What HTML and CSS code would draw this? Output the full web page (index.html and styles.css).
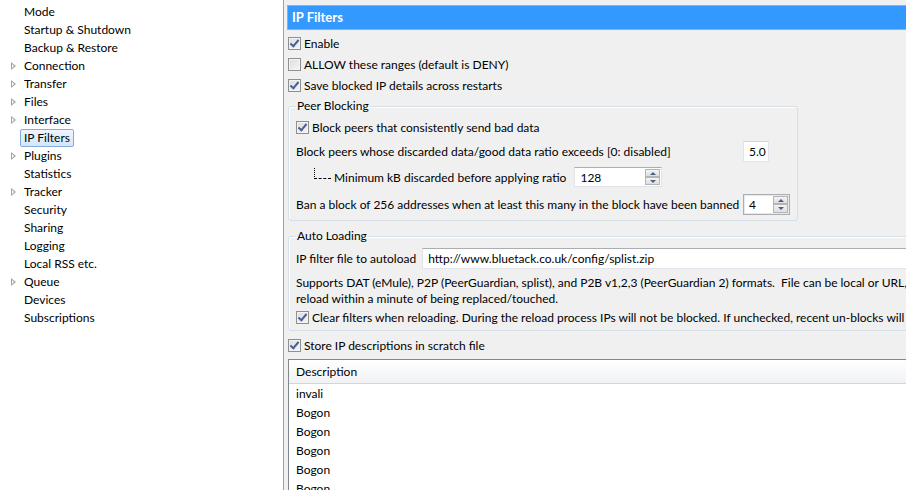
FILE: index.html
```html
<!DOCTYPE html>
<html lang="en">
<head>
    <meta charset="UTF-8">
    <title>Options - IP Filters</title>
    <link rel="stylesheet" href="styles.css">
</head>
<body>
<div class="window">

    <!-- left side: options tree -->
    <div class="tree">
        <ul>
            <li><span class="leaf">Mode</span></li>
            <li><span class="leaf">Startup &amp; Shutdown</span></li>
            <li><span class="leaf">Backup &amp; Restore</span></li>
            <li class="has-kids"><span class="leaf">Connection</span></li>
            <li class="has-kids"><span class="leaf">Transfer</span></li>
            <li class="has-kids"><span class="leaf">Files</span></li>
            <li class="has-kids"><span class="leaf">Interface</span></li>
            <li class="selected"><span class="leaf">IP Filters</span></li>
            <li class="has-kids"><span class="leaf">Plugins</span></li>
            <li><span class="leaf">Statistics</span></li>
            <li class="has-kids"><span class="leaf">Tracker</span></li>
            <li><span class="leaf">Security</span></li>
            <li><span class="leaf">Sharing</span></li>
            <li><span class="leaf">Logging</span></li>
            <li><span class="leaf">Local RSS etc.</span></li>
            <li class="has-kids"><span class="leaf">Queue</span></li>
            <li><span class="leaf">Devices</span></li>
            <li><span class="leaf">Subscriptions</span></li>
        </ul>
    </div>

    <!-- right side: the page itself -->
    <div class="page">
        <div class="page-inner">
            <div class="title">IP Filters</div>

            <label class="check"><span class="box on"></span>Enable</label>
            <label class="check"><span class="box"></span>ALLOW these ranges (default is DENY)</label>
            <label class="check"><span class="box on"></span>Save blocked IP details across restarts</label>

            <fieldset class="group peer">
                <legend>Peer Blocking</legend>
                <label class="check first"><span class="box on"></span>Block peers that consistently send bad data</label>
                <div class="row ratio">
                    <span class="lbl">Block peers whose discarded data/good data ratio exceeds [0: disabled]</span>
                    <span class="field small">5.0</span>
                </div>
                <div class="row minkb">
                    <span class="connector"></span>
                    <span>Minimum kB discarded before applying ratio</span>
                    <span class="field spin wide">128<span class="arrows"><i class="up"></i><i class="down"></i></span></span>
                </div>
                <div class="row ban">
                    <span class="lbl">Ban a block of 256 addresses when at least this many in the block have been banned</span>
                    <span class="field spin">4<span class="arrows"><i class="up"></i><i class="down"></i></span></span>
                </div>
            </fieldset>

            <fieldset class="group auto">
                <legend>Auto Loading</legend>
                <div class="row url">
                    <span>IP filter file to autoload</span>
                    <span class="field text">http://www.bluetack.co.uk/config/splist.zip</span>
                </div>
                <p class="note">Supports DAT (eMule), P2P (PeerGuardian, splist), and P2B v1,2,3 (PeerGuardian 2) formats.&nbsp; File can be local or URL, and will automatically<br>reload within a minute of being replaced/touched.</p>
                <label class="check"><span class="box on"></span>Clear filters when reloading. During the reload process IPs will not be blocked. If unchecked, recent un-blocks will be lost</label>
            </fieldset>

            <label class="check store"><span class="box on"></span>Store IP descriptions in scratch file</label>

            <div class="table">
                <div class="thead">Description</div>
                <div class="trow">invali</div>
                <div class="trow">Bogon</div>
                <div class="trow">Bogon</div>
                <div class="trow">Bogon</div>
                <div class="trow">Bogon</div>
                <div class="trow">Bogon</div>
                <div class="trow">Bogon</div>
            </div>
        </div>
    </div>
</div>
</body>
</html>
```
FILE: styles.css
```css
body{
    margin: 0;
    background-color: #f0f0f0;
    font-family: Lato, "Noto Sans", sans-serif;
    font-size: 12px;
    color: #000;
}
.window{
    display: flex;
    width: 906px;
    height: 490px;
    overflow: hidden;
}

/* tree */
.tree{
    width: 283px;
    flex: none;
    background-color: #fff;
    border-right: 1px solid #a0a0a0;
}
.tree ul{
    list-style: none;
    margin: 3px 0 0 0;
    padding: 0;
}
.tree li{
    position: relative;
    height: 18px;
    line-height: 18px;
    padding-left: 20px;
}
.tree .leaf{
    display: inline-block;
    padding: 0 3px;
    border: 1px solid transparent;
    line-height: 16px;
    border-radius: 2px;
}
.tree li.has-kids::before{
    content: "";
    position: absolute;
    left: 11px;
    top: 5px;
    width: 0;
    height: 0;
    border-top: 4px solid transparent;
    border-bottom: 4px solid transparent;
    border-left: 5px solid #a6a6a6;
}
.tree li.has-kids::after{
    content: "";
    position: absolute;
    left: 12px;
    top: 7px;
    width: 0;
    height: 0;
    border-top: 2px solid transparent;
    border-bottom: 2px solid transparent;
    border-left: 2px solid #fff;
}
.tree li.selected .leaf{
    border-color: #84acdd;
    background: linear-gradient(#eef5fd, #d3e6fc);
}

/* page */
.page{
    flex: 1;
    min-width: 0;
    overflow: hidden;
}
.page-inner{
    width: 900px;
    padding-left: 4px;
}
.title{
    margin: 5px 0 3px -1px;
    height: 25px;
    box-sizing: border-box;
    border: 1px solid #8cb0d8;
    background-color: #3399ff;
    color: #fff;
    font-weight: bold;
    font-size: 13px;
    line-height: 23px;
    padding-left: 4px;
}

.check{
    display: flex;
    align-items: center;
    height: 21px;
    white-space: nowrap;
}
.box{
    width: 13px;
    height: 13px;
    box-sizing: border-box;
    border: 1px solid #8e8f8f;
    background: linear-gradient(135deg, #dcdcdc, #f6f6f6);
    box-shadow: inset 0 0 0 1px #f4f4f4;
    margin-right: 3px;
    flex: none;
    position: relative;
}
.box.on::after{
    content: "";
    position: absolute;
    left: 3px;
    top: 0px;
    width: 3px;
    height: 7px;
    border-right: 2px solid #4a5f97;
    border-bottom: 2px solid #4a5f97;
    transform: rotate(40deg);
}

/* group boxes */
.group{
    margin: 2px 0 0 0;
    padding: 0 6px 2px 7px;
    border: 1px solid #d5dfe5;
    border-radius: 3px;
    box-shadow: inset 1px 1px 0 #fff;
}
.group legend{
    padding: 0 1px;
    line-height: 16px;
}
.peer{
    width: 510px;
    box-sizing: border-box;
}
.peer .first{
    margin-top: 3px;
}
.row{
    display: flex;
    align-items: center;
    white-space: nowrap;
}
.ratio{ height: 26px; }
.minkb{ height: 26px; }
.ban{ height: 28px; }
.row .lbl{
    width: 447px;
    flex: none;
}
.connector{
    width: 16px;
    height: 10px;
    margin: -8px 3px 0 18px;
    border-left: 1px dotted #000;
    border-bottom: 1px dashed #000;
}
.field{
    display: inline-flex;
    align-items: center;
    box-sizing: border-box;
    height: 21px;
    background: #fff;
    border: 1px solid #e2e3ea;
    border-top-color: #d0d3da;
    padding-left: 5px;
    position: relative;
}
.field.small{ width: 26px; }
.field.spin{
    width: 47px;
    border-color: #abadb3;
    box-shadow: inset 0 0 0 1px #e8e8e8;
}
.field.spin.wide{
    width: 88px;
    height: 20px;
    margin-left: 8px;
    border-color: #e2e3ea;
    border-top-color: #abadb3;
    box-shadow: none;
}
.arrows{
    position: absolute;
    right: 1px;
    top: 1px;
    bottom: 1px;
    width: 15px;
    display: flex;
    flex-direction: column;
}
.arrows i{
    flex: 1;
    border: 1px solid #b5b5b5;
    background: linear-gradient(#f4f4f4, #dedede);
    position: relative;
}
.arrows i::after{
    content: "";
    position: absolute;
    left: 4px;
    top: 2px;
    border-left: 3px solid transparent;
    border-right: 3px solid transparent;
}
.arrows .up::after{ border-bottom: 3px solid #4d6185; }
.arrows .down::after{ border-top: 3px solid #4d6185; }

.auto{
    margin-top: 7px;
    width: 900px;
    box-sizing: border-box;
}
.url{
    height: 25px;
    margin-top: 2px;
}
.field.text{
    flex: 1;
    margin-left: 6px;
    border-color: #e2e3ea;
    border-top-color: #abadb3;
    padding-left: 5px;
}
.note{
    margin: 4px 0 0 0;
    line-height: 16px;
    white-space: nowrap;
}
.store{
    margin-top: 4px;
}

/* table */
.table{
    margin-top: 3px;
    border: 1px solid #828790;
    background: #fff;
    height: 200px;
}
.thead{
    height: 24px;
    line-height: 24px;
    padding-left: 7px;
    background: linear-gradient(#fff, #f1f2f4);
    border-bottom: 1px solid #d5d5d5;
    box-sizing: border-box;
}
.trow{
    height: 19px;
    line-height: 19px;
    padding-left: 7px;
}
```
